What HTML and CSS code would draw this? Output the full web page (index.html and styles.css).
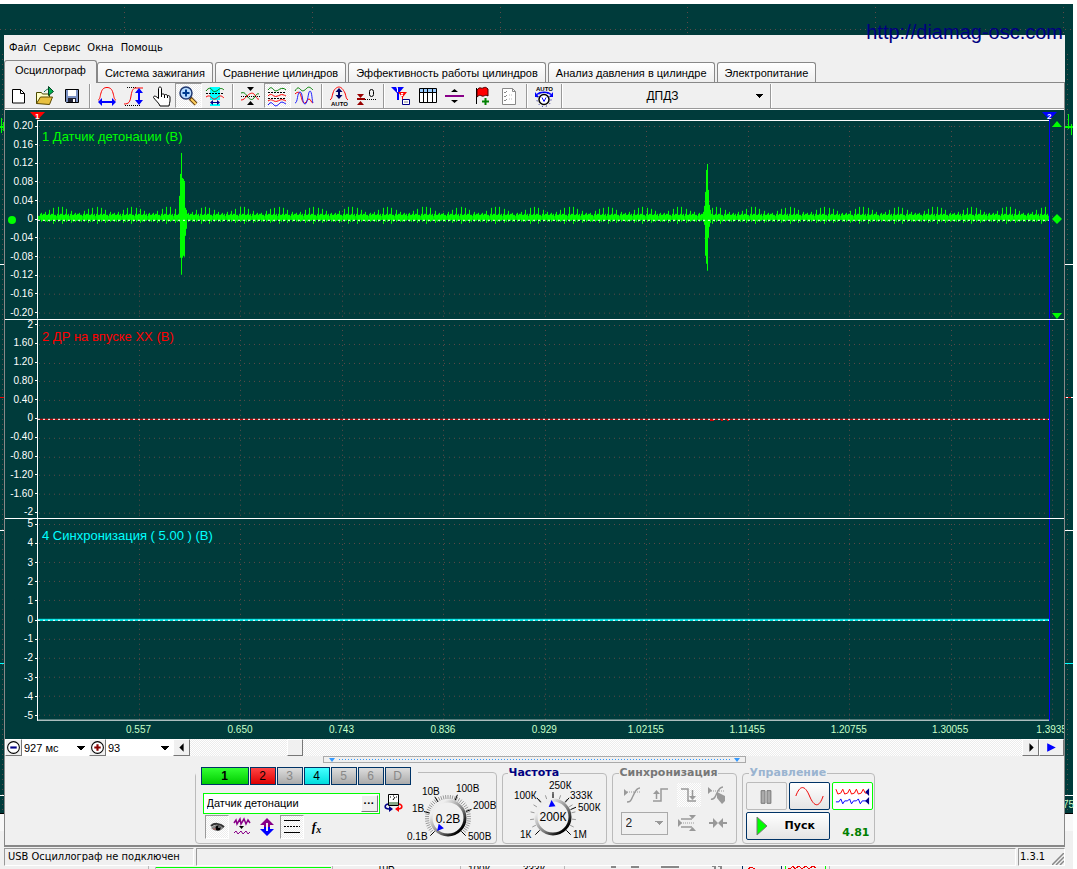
FILE: index.html
```html
<!DOCTYPE html>
<html lang="ru">
<head>
<meta charset="utf-8">
<title>Осциллограф</title>
<link rel="stylesheet" href="styles.css">
</head>
<body>
<div class="desktop">
  <svg class="backdrop" width="1077" height="869" shape-rendering="crispEdges" aria-hidden="true">
    <rect x="0" y="4" width="1073" height="865" fill="#f0f0f0"/>
    <rect x="0" y="4" width="1073" height="810" fill="#003b3b"/>
    <g stroke="#5c4a48" stroke-dasharray="1 4">
      <path d="M0 29.5H1073M124.5 7V35M312.5 7V35M500.5 7V35M687.5 7V35M875.5 7V35M1063.5 7V35"/>
      <path d="M2.5 54V810M1067.5 54V810"/>
    </g>
    <path d="M1065 264.5H1073M1065 530.5H1073M1065 795.5H1073M0 264.5H4M0 530.5H4M0 795.5H4" stroke="#fff"/>
    <path d="M1065 397.5H1073M0 397.5H4" stroke="#e00"/>
    <path d="M1066 397.5h2M1071 397.5h2" stroke="#fff"/>
    <path d="M1065 663.5H1073M0 663.5H4" stroke="#0ff"/>
    <path d="M0 126.5H4M0 127.5H4M1.500 118V133M3.500 122V131M1065 126.500H1073M1065 127.500H1073M1068.500 114V129M1071.500 124V135" stroke="#0f0"/>
    <path d="M0 813.5H4M1065 813.5H1073" stroke="#000"/>
    <rect x="0" y="814" width="1073" height="17" fill="#f8f8f8"/>
    <text x="1063" y="808" class="backdrop-text pale">75</text>
    <path d="M155 867.5H331" stroke="#0f0"/>
    <path d="M155 869V866.5M148.5 866V869M332.5 866V869M460.5 866V869M564.5 866V869M829.5 866V869" stroke="#b8b8b8"/>
    <text x="377" y="871" class="backdrop-text">10В</text>
    <text x="468" y="873" class="backdrop-text">100К</text>
    <text x="523" y="873" class="backdrop-text">333К</text>
    <path d="M611 867h5M631 867h8M661 867h18M712 866h3v3M718 866h3v3" stroke="#888" stroke-width="2" fill="none"/>
    <path d="M742.5 869V866M781.5 869V866" stroke="#036"/>
    <path d="M785.5 869V866M825.5 869V866" stroke="#0f0"/>
    <path d="M748 869l3-2 4 2M788 868h3l2-2 2 3 4-3 3 3 4-3 3 3 4-3 3 2" stroke="#e00" fill="none"/>
  </svg>

  <main class="window">
    <nav class="menu">
      <button>Файл</button><button>Сервис</button><button>Окна</button><button>Помощь</button>
    </nav>
    <div class="tabs">
      <button class="tab active">Осциллограф</button>
      <button class="tab">Система зажигания</button>
      <button class="tab">Сравнение цилиндров</button>
      <button class="tab">Эффективность работы цилиндров</button>
      <button class="tab">Анализ давления в цилиндре</button>
      <button class="tab">Электропитание</button>
    </div>

    <div class="page">
      <div class="toolbar">
        <button class="tool" aria-label="Новый"><svg viewBox="0 0 22 22"><path d="M5.5 4.500h8l4 4v9.500h-12z" fill="#fff" stroke="#000"/><path d="M13.500 4.500v4h4" fill="none" stroke="#000"/></svg></button>
        <button class="tool" aria-label="Открыть"><svg viewBox="0 0 22 22"><path d="M2.500 18.500v-11h5l1 1.500h7v4" fill="#ffffc8" stroke="#4a4a00"/><path d="M2.500 18.500l4-6.500h12l-3 7.500z" fill="#e8c040" stroke="#5a4800"/><path d="M10 7c2-2 3-3 5-3" stroke="#064" fill="none"/><path d="M14.500 1.500l5 5-5 4z" fill="#00b050" stroke="#042"/></svg></button>
        <button class="tool" aria-label="Сохранить"><svg viewBox="0 0 22 22"><path d="M4.500 4.500h13v13h-12l-1-1z" fill="#7c92c4" stroke="#000"/><path d="M7 5h8v6h-8z" fill="#fff"/><path d="M7 13h8v4h-8z" fill="#223"/><path d="M12 14h2v3h-2z" fill="#fff"/></svg></button>
        <i class="sep"></i>
        <button class="tool" aria-label="Период"><svg viewBox="0 0 22 22" fill="none"><path d="M2 15c2 0 2-4 3-7 1-4 3-5.500 6-5.500s5 1.500 6 5.500c1 3 1 7 3 7" stroke="red"/><path d="M3 17h16" stroke="#00f" stroke-width="2"/><path d="M2 17l4-4v8zM20 17l-4-4v8z" fill="#00f"/></svg></button>
        <button class="tool" aria-label="Амплитуда"><svg viewBox="0 0 22 22" fill="none"><path d="M4 2.500h10M2 20.500h16" stroke="#000" stroke-dasharray="1 1"/><path d="M1 19c5 0 6-2 7-8 1-7 3-8 5-8h7" stroke="red"/><path d="M16 5v13" stroke="#00f" stroke-width="2"/><path d="M16 3l4 5h-8zM16 20l4-5h-8z" fill="#00f"/></svg></button>
        <button class="tool" aria-label="Рука"><svg viewBox="0 0 22 22"><path d="M8.500 13V3.500c0-2 3-2 3 0v6c1-1 3-.5 3 .5 1-1 3-.5 3 1 1-1 2.500 0 2.500 1v4c0 2-1 3-1 5H10c-1-3-4-5-6.500-8.500 0-2 2-2 5 1z" fill="#fff" stroke="#000"/><path d="M11.500 9v3M14.500 10v3M17.500 11v2" stroke="#000"/></svg></button>
        <button class="tool pressed" aria-label="Масштаб"><svg viewBox="0 0 22 22"><path d="M13 13l6 6" stroke="#654010" stroke-width="4"/><path d="M14 14l5 5" stroke="#ffd060" stroke-width="2"/><circle cx="9" cy="8" r="6" fill="#b8dcff" stroke="#203870" stroke-width="1.500"/><path d="M9 4.500v7M5.500 8h7" stroke="#003c90" stroke-width="2"/></svg></button>
        <button class="tool" aria-label="Выделение"><svg viewBox="0 0 22 22" fill="none"><path d="M6 2h10v19H6z" fill="#0ff"/><path d="M2 6c3-4 5-3 6-1s4 2 6 0 4-2 6 0" stroke="#008000"/><path d="M2 8.500h18" stroke="#000" stroke-dasharray="2 1"/><path d="M2 12c3-2 4-1 6 1s4 1 6-1 4-1 6 1" stroke="red"/><path d="M6 15h10v4H6z" fill="#f0f0f0"/><path d="M8 17.500h6" stroke="#008"/><path d="M6 17.500l3-2.500v5zM16 17.500l-3-2.500v5z" fill="#008"/></svg></button>
        <i class="sep"></i>
        <button class="tool" aria-label="Сжать"><svg viewBox="0 0 22 22" fill="none"><path d="M2 8c3-1 4 0 6 3s5 5 7 2 3-5 5-4" stroke="green"/><path d="M2 15c3 0 4-2 6-4s5-4 7-2 3 6 5 5" stroke="red"/><path d="M2 11.500h19" stroke="#000" stroke-dasharray="1 1"/><path d="M8 2h7l-3.500 4zM8 20h7l-3.500-4z" fill="#000"/></svg></button>
        <button class="tool pressed" aria-label="Разделить"><svg viewBox="0 0 22 22" fill="none"><path d="M2 5c3-4 4-2 6 0s4 0 6-1 4-1 6 1" stroke="green"/><path d="M2 7.500h18M2 13.500h18" stroke="#000" stroke-dasharray="2 1"/><path d="M2 11c3-3 4-1 6 0s4 0 6-1 4 0 6 1M2 16c3-2 4-1 6 0s4 0 6-1 4 0 6 1" stroke="red"/><path d="M2 20c3-4 4-2 6 0s4 0 6-2 4 0 6 1" stroke="#00f"/></svg></button>
        <button class="tool" aria-label="Наложить"><svg viewBox="0 0 22 22" fill="none"><path d="M2 6c3-5 4-3 6-1s4 0 6-2 4 0 6 2" stroke="green"/><path d="M2 9c3-3 5-2 6 2s2 8 4 7 2-4 4-4 2 4 4 4" stroke="red"/><path d="M2 18c3 0 2-11 5-11s2 12 5 12 3-13 5-13 2 10 3 12" stroke="#22f"/></svg></button>
        <i class="sep"></i>
        <button class="tool" aria-label="Автоамплитуда"><svg viewBox="0 0 22 22" fill="none"><path d="M2 15c2-1 2-4 3-7 1-4 4-6 6-6s4 2 6 6c1 3 1 6 3 7" stroke="red"/><path d="M11 5v8" stroke="#006" stroke-width="2"/><path d="M11 3l3.500 4h-7zM11 14l3.500-4h-7z" fill="#006"/><text x="3" y="21" class="icon-text">AUTO</text></svg></button>
        <button class="tool" aria-label="Ноль"><svg viewBox="0 0 22 22" fill="none"><path d="M2 14h7M10 14.500h11" stroke="#000" stroke-dasharray="1 1"/><path d="M2 9h7l-3.500 4zM2 20h7l-3.500-4z" fill="#900"/><path d="M2 14h8" stroke="#900" stroke-width="2"/><rect x="14.500" y="4.500" width="4" height="7" rx="2" stroke="#000"/></svg></button>
        <i class="sep"></i>
        <button class="tool" aria-label="Маркеры"><svg viewBox="0 0 22 22"><path d="M1 2h13l-5 6v7H7V8z" fill="#00f"/><path d="M8 7h9l-4 5v7h-1v-7z" fill="red"/><path d="M6 3l1.500-.5V7M11 8.500h2l-2 2h2" stroke="#fff" fill="none"/><path d="M12.500 14.500h7v5h-7z" fill="#fff" stroke="#008"/><path d="M14 17h4" stroke="#888"/></svg></button>
        <button class="tool" aria-label="Таблица"><svg viewBox="0 0 22 22" fill="none"><path d="M2.500 3.500h17v14h-17z" fill="#fff" stroke="#000"/><path d="M3 4h16v3H3z" fill="#9cf"/><path d="M3 7.500h16M6.500 4v13M10.500 4v13M15.500 4v13" stroke="#000"/></svg></button>
        <button class="tool" aria-label="Центр"><svg viewBox="0 0 22 22"><path d="M1 10h19v2H1z" fill="#808"/><path d="M7 7h7l-3.500-3zM7 15h7l-3.500 3z"/></svg></button>
        <button class="tool" aria-label="Флаг"><svg viewBox="0 0 22 22"><path d="M5.500 3v16" stroke="#000"/><path d="M6 5c3-4 4-1 6-2s3-1 5 1v7c-3-2-4 1-6 0s-3-1-5 1z" fill="red" stroke="#400"/><path d="M14.500 13v7M11 16.500h7" stroke="green" stroke-width="2"/></svg></button>
        <button class="tool" aria-label="Отчёт"><svg viewBox="0 0 22 22" fill="none" stroke="#888"><path d="M4.500 3.500h10l3 3v13h-13z" fill="#fff"/><path d="M14.500 3.500v3h3M6 7l1 1 2-2M6 11l1 1 2-2M6 15l1 1 2-2"/><path d="M11 10h4M11 14h4" stroke="#bbb" stroke-dasharray="1 1"/></svg></button>
        <i class="sep"></i>
        <button class="tool" aria-label="Авторежим"><svg viewBox="0 0 22 22" fill="none"><text x="3" y="6" class="icon-text">AUTO</text><circle cx="11" cy="14.500" r="5" fill="#fff" stroke="#000" stroke-width="1.500"/><path d="M9 12.500l2 4 2-4" stroke="#00f"/><path d="M4 9.500c3-3 11-3 14 0" stroke="#00f" stroke-width="1.500"/><path d="M2 7v5h4zM20 7v5h-4z" fill="#00f"/><circle cx="11" cy="14.500" r="7" stroke="#008" stroke-dasharray="1 3"/></svg></button>
        <i class="sep"></i>
        <select class="preset" aria-label="Датчик"><option>ДПДЗ</option></select>
        <i class="sep"></i>
      </div>

      <div class="chart">
        <section class="channel first">
          <ol class="scale"><li>0.20</li><li>0.16</li><li>0.12</li><li>0.08</li><li>0.04</li><li>0</li><li>-0.04</li><li>-0.08</li><li>-0.12</li><li>-0.16</li><li>-0.20</li></ol>
          <div class="plot"><svg viewBox="0 0 1027 199" preserveAspectRatio="none" data-top="6" data-step="18.7" data-trace="knock"></svg><h2 class="green">1 Датчик детонации (В)</h2></div>
        </section>
        <section class="channel second">
          <ol class="scale"><li>2</li><li>1.60</li><li>1.20</li><li>0.80</li><li>0.40</li><li>0</li><li>-0.40</li><li>-0.80</li><li>-1.20</li><li>-1.60</li><li>-2</li></ol>
          <div class="plot"><svg viewBox="0 0 1027 199" preserveAspectRatio="none" data-top="5" data-step="18.8" data-trace="idle"></svg><h2 class="red">2 ДР на впуске ХХ (В)</h2></div>
        </section>
        <section class="channel third">
          <ol class="scale"><li>5</li><li>4</li><li>3</li><li>2</li><li>1</li><li>0</li><li>-1</li><li>-2</li><li>-3</li><li>-4</li><li>-5</li></ol>
          <div class="plot"><svg viewBox="0 0 1027 202" preserveAspectRatio="none" data-top="5" data-step="19.1" data-trace="sync"></svg><h2 class="cyan">4 Синхронизация ( 5.00 ) (В)</h2></div>
        </section>
        <ol class="times"><li>0.557</li><li>0.650</li><li>0.743</li><li>0.836</li><li>0.929</li><li>1.02155</li><li>1.11455</li><li>1.20755</li><li>1.30055</li><li>1.3935</li></ol>
        <svg class="marker start" viewBox="0 0 15 8"><path d="M0 0h15l-7.500 8z" fill="red"/><text x="5" y="7">1</text></svg>
        <svg class="marker end" viewBox="0 0 15 8"><path d="M0 0h15l-7.500 8z" fill="#00f"/><text x="5" y="7">2</text></svg>
        <svg class="limit top" viewBox="0 0 10 6"><path d="M5 0l5 6H0z" fill="#0f0"/></svg>
        <svg class="limit mid" viewBox="0 0 10 10"><path d="M5 0l5 5-5 5-5-5z" fill="#0f0"/></svg>
        <svg class="limit low" viewBox="0 0 10 6"><path d="M0 0h10L5 6z" fill="#0f0"/></svg>
        <i class="zero-dot"></i>
      </div>

      <div class="timebar">
        <button class="step" aria-label="Уменьшить"><svg viewBox="0 0 14 14"><circle cx="7" cy="7" r="5.500" fill="#fff" stroke="#000"/><path d="M4 7h6" stroke="#008" stroke-width="2"/></svg></button>
        <select aria-label="Развёртка"><option>927 мс</option></select>
        <button class="step" aria-label="Увеличить"><svg viewBox="0 0 14 14"><circle cx="7" cy="7" r="5.500" fill="#fff" stroke="#000"/><path d="M4 7h6M7 4v6" stroke="#800" stroke-width="2"/></svg></button>
        <select aria-label="Деление"><option>93</option></select>
        <button class="step" aria-label="Назад"><svg viewBox="0 0 14 14"><path d="M9 3v8L5 7z"/></svg></button>
        <input type="range" min="0" max="1000" value="119" aria-label="Позиция">
        <button class="step" aria-label="Вперёд"><svg viewBox="0 0 14 14"><path d="M6 3v8l4-4z"/></svg></button>
        <button class="step wide" aria-label="В конец"><svg viewBox="0 0 14 14"><path d="M3 3v8l8-4z" fill="#00f"/></svg></button>
      </div>

      <div class="splitter"><i></i><span></span><i></i></div>

      <div class="controls">
        <section class="group channels">
          <div class="channel-tabs">
            <button class="ch one">1</button><button class="ch two">2</button><button class="ch" disabled>3</button><button class="ch four">4</button><button class="ch" disabled>5</button><button class="ch" disabled>6</button><button class="ch" disabled>D</button>
          </div>
          <div class="channel-body">
            <div class="channel-left">
              <div class="sensor-row">
                <div class="sensor"><input type="text" value="Датчик детонации" aria-label="Имя датчика"><button aria-label="Выбрать">···</button></div>
                <button class="mini" aria-label="Прибор"><svg viewBox="0 0 20 20" fill="none"><path d="M4.500 1.500h10v11h-10z" fill="#fff" stroke="#000"/><path d="M5 9h9v3H5z" fill="#8a8"/><path d="M6 4h1M9 3h1M12 4h1M9 7l2-3" stroke="#000"/><path d="M4 11c-4 1-4 5 1 5" stroke="#008" stroke-width="1.500"/><path d="M5 13l4 3-4 3z" fill="#008"/><path d="M15 11c4 1 4 5-1 5" stroke="red" stroke-width="1.500"/><path d="M15 13l-4 3 4 3z" fill="red"/></svg></button>
              </div>
              <div class="mini-row">
                <button class="mini pressed" aria-label="Видимость"><svg viewBox="0 0 20 20"><path d="M4 11c4-4 9-5 13-1-3 5-9 5-13 1z" fill="#888"/><path d="M4 9c3-3 9-3 13 1" stroke="#333" stroke-width="2" fill="none"/><circle cx="11" cy="11" r="2.500"/><path d="M6 12h3" stroke="#a55"/><circle cx="12" cy="10" r=".8" fill="#ddd"/></svg></button>
                <button class="mini" aria-label="Фильтр"><svg viewBox="0 0 20 20" fill="none" stroke="#808"><path d="M2 6l2-3 1 4 3-5 1 5 3-5 2 5 2-4 2 3" stroke-width="1.500"/><path d="M2 16l2-2 2 3 3-3 2 3 3-3 2 3 2-2"/><path d="M7 9h5l-2.500 3z" fill="#000" stroke="none"/></svg></button>
                <button class="mini" aria-label="Сдвиг"><svg viewBox="0 0 20 20"><path d="M10 1l7 7h-4v3H7V8H3z" fill="#808"/><path d="M10 19l7-7h-4v-2H7v2H3z" fill="#00f"/><path d="M10 6v8" stroke="#eee" stroke-width="2"/></svg></button>
                <button class="mini pressed" aria-label="Линии"><svg viewBox="0 0 20 20" stroke="#000"><path d="M2 3.500h16M2 15.500h16"/><path d="M2 9.500h16" stroke-dasharray="2 1"/></svg></button>
                <button class="mini formula" aria-label="Формула"><em>f</em><sub>x</sub></button>
              </div>
            </div>
            <svg class="knob" data-angle="-140" data-ticks="44" viewBox="0 0 90 60" width="90" height="60">
              <text x="16" y="12">10В</text><text x="50" y="9">100В</text><text x="6" y="29">1В</text><text x="67" y="26">200В</text><text x="1" y="57">0.1В</text><text x="62" y="57">500В</text>
              <text class="value" x="42" y="40">0.2В</text>
            </svg>
          </div>
        </section>

        <fieldset class="group freq">
          <legend>Частота</legend>
          <svg class="knob" data-angle="-5" data-ticks="14" viewBox="0 0 100 60" width="100" height="60">
            <text x="44" y="10">250К</text><text x="9" y="20">100К</text><text x="65" y="20">333К</text><text x="73" y="32">500К</text><text x="15" y="59">1К</text><text x="68" y="59">1М</text>
            <text class="value" x="48" y="42">200К</text>
          </svg>
        </fieldset>

        <fieldset class="group sync">
          <legend>Синхронизация</legend>
          <div class="sync-row">
            <button class="mini" disabled aria-label="Уровень"><svg viewBox="0 0 20 20" fill="none" stroke="#999"><path d="M2 7h15" stroke-dasharray="1 1"/><path d="M4 17c4 0 4-2 6-6s3-8 7-8" stroke-width="1.500"/><path d="M1 4v7l4-3.500z" fill="#999" stroke="none"/></svg></button>
            <button class="mini" disabled aria-label="Фронт"><svg viewBox="0 0 20 20" fill="none" stroke="#999" stroke-width="1.500"><path d="M2 16h8V4h7M5.500 14V7"/><path d="M2 9l3.500-4L9 9z" fill="#999" stroke="none"/></svg></button>
            <button class="mini hatched" disabled aria-label="Спад"><svg viewBox="0 0 20 20" fill="none" stroke="#999" stroke-width="1.500"><path d="M2 4h7v12h8M13.500 5v7"/><path d="M10 11l3.500 4 3.500-4z" fill="#999" stroke="none"/></svg></button>
            <button class="mini" disabled aria-label="Ручной"><svg viewBox="0 0 20 20" fill="none" stroke="#999"><path d="M2 6h15" stroke-dasharray="1 1"/><path d="M4 14c6 2 5-12 12-12" stroke-width="1.500"/><path d="M1 2v7l4-3.500zM10 7l8 4v5l-3 3-5-6z" fill="#999" stroke="none"/></svg></button>
          </div>
          <div class="sync-row">
            <select disabled aria-label="Канал"><option>2</option></select>
            <button class="mini" disabled aria-label="Порог"><svg viewBox="0 0 20 20" fill="none" stroke="#999"><path d="M4 6h11M4 14h11" stroke-width="1.500"/><path d="M4 10h13" stroke-dasharray="1 1"/><path d="M1 6v8l4-4zM12 2h7l-3.500 4zM12 18h7l-3.500-4z" fill="#999" stroke="none"/></svg></button>
            <button class="mini" disabled aria-label="Центр"><svg viewBox="0 0 20 20" fill="#999"><path d="M1 9h4V5l5 5-5 5v-4H1zM19 9h-4V5l-5 5 5 5v-4h4z"/></svg></button>
          </div>
        </fieldset>

        <fieldset class="group run">
          <legend>Управление</legend>
          <div class="run-grid">
            <button class="big" disabled aria-label="Пауза"><svg viewBox="0 0 40 26" stroke="#777" fill="#aaa"><path d="M14.500 7.500h4v13h-4zM20.500 7.500h4v13h-4z"/></svg></button>
            <button class="big blue" aria-label="Однократно"><svg viewBox="0 0 40 26"><path d="M6 13c4-11 9-12 14 0s10 12 14 0" stroke="#e00" fill="none"/></svg></button>
            <button class="big lime" aria-label="Непрерывно"><svg viewBox="0 0 40 26" fill="none"><path d="M3 6l2 5 3-1 2-4 2 5 3-1 2-4 2 5 3-1 2-4 2 5 3-1 2-4 2 4h3" stroke="red"/><path d="M3 19h3l2-3 2 5 2-3h3l2-2 2 5 2-3h3l2-2 2 5 2-3h4" stroke="#00f"/><path d="M37 5v8l-4-4zM37 14v8l-4-4z" fill="#008"/></svg></button>
            <button class="start-button"><svg viewBox="0 0 12 20"><path d="M1 1l10 9-10 9z" fill="#0f0" stroke="#777"/></svg>Пуск</button>
            <output>4.81</output>
          </div>
        </fieldset>
      </div>
    </div>

    <footer class="status">
      <span class="message">USB Осциллограф не подключен</span>
      <span class="blank"></span>
      <span class="version">1.3.1<svg viewBox="0 0 12 12" width="12" height="12"><path d="M0 12L12 0M4 12l8-8M8 12l4-4" stroke="#888" stroke-width="1.500"/></svg></span>
    </footer>
  </main>
  <a class="site" href="#">http://diamag-osc.com</a>
</div>
<script src="script.js"></script>
</body>
</html>
```
FILE: styles.css
```css
* { box-sizing: border-box; }
body { margin: 0; background: #fff; font: 11px/14px "Liberation Sans", Arial, sans-serif; color: #000; }
button, select, input { font: inherit; color: inherit; margin: 0; padding: 0; border: 0; border-radius: 0; background: none; }
select { appearance: none; opacity: 1; }
ol { list-style: none; margin: 0; padding: 0; }

.desktop { position: relative; min-height: 100vh; padding: 35px 12px 3px 4px; display: flex; overflow: hidden; }
.backdrop { position: absolute; left: 0; top: 0; }
.backdrop-text { font-size: 10px; fill: #000; }
.pale { fill: #c8ffc8; }
.site { position: absolute; right: 14px; top: 20px; font-size: 20px; line-height: 24px; color: navy; text-decoration: none; }
.window { position: relative; flex: 1; min-width: 0; display: flex; flex-direction: column; background: #f0f0f0; }

.menu { display: flex; gap: 7px; padding: 6px 5px 5px; font: 11px/14px "DejaVu Sans Condensed", "DejaVu Sans", sans-serif; }
.tabs { display: flex; align-items: flex-end; gap: 2px; height: 22px; }
.tab { height: 20px; padding: 0 7px; border: 1px solid #888; border-bottom: 0; border-radius: 3px 3px 0 0; background: linear-gradient(#fff, #eee); white-space: nowrap; }
.tab.active { height: 23px; padding: 0 10px 4px; margin: 0 -2px -1px 0; background: #f0f0f0; z-index: 1; }

.page { flex: 1; min-height: 0; display: flex; flex-direction: column; border: 1px solid #888; border-bottom-width: 2px; }
.toolbar { display: flex; align-items: center; height: 26px; border-bottom: 1px solid #999; box-shadow: 0 1px #fff; margin-bottom: 1px; }
.tool { flex: none; width: 27px; height: 25px; padding: 1px 2px; }
.tool svg { display: block; width: 22px; height: 22px; }
.icon-text { font: bold 6px "Liberation Sans", sans-serif; fill: #000; }
.pressed, .hatched { background: repeating-conic-gradient(#fff 0 25%, #ececec 0 50%) 0 0 / 2px 2px; }
.pressed { border: 1px solid #999; border-right-color: #fff; border-bottom-color: #fff; }
.tool.pressed { padding: 0 1px; }
.sep { flex: none; width: 8px; height: 24px; background: linear-gradient(90deg, transparent 3px, #999 3px 4px, #fff 4px 5px, transparent 5px); }
.preset { width: 201px; height: 24px; padding-right: 8px; font-size: 12px; text-align: center; text-align-last: center; }
.preset, .timebar select, .sync select {
  background-image: conic-gradient(from -45deg at 50% 100%, #000 90deg, transparent 0);
  background-repeat: no-repeat; background-position: right 4px center; background-size: 8px 4px;
}

.chart { position: relative; flex: 1; min-height: 400px; display: grid; grid-template-rows: 210fr 200fr 202fr 18px; background: #003b3b; color: #fff; font-size: 10px; line-height: 10px; overflow: hidden; }
.channel { display: grid; grid-template-columns: 32px minmax(0, 1fr); min-height: 0; border-bottom: 1px solid #fff; }
.channel.first { padding-top: 10px; }
.channel.third { border: 0; }
.scale { display: flex; flex-direction: column; justify-content: space-between; }
.first .scale { padding: 1px 0; }
.second .scale { padding-bottom: 1px; }
.scale li { display: flex; justify-content: flex-end; align-items: center; gap: 2px; }
.scale li::after { content: ""; width: 2px; height: 1px; background: #fff; }
.plot { position: relative; min-height: 0; }
.plot > svg { position: absolute; width: 100%; height: 100%; shape-rendering: crispEdges; }
.plot h2 { position: absolute; left: 5px; top: 9px; margin: 0; font-size: 13px; line-height: 15px; font-weight: 400; }
.green { color: #0f0; } .red { color: #f00; } .cyan { color: #0ff; }
.times { display: grid; grid-template-columns: 4.95% repeat(10, 9.879%); margin-left: 32px; padding-top: 4px; text-align: center; color: #c8ffc8; white-space: nowrap; overflow: hidden; }
.times li:first-child { grid-column: 2; }
.marker { position: absolute; top: 2px; width: 15px; height: 8px; }
.marker text { font: bold 8px "Liberation Sans", sans-serif; fill: #fff; }
.start { left: 25px; } .end { right: 7px; }
.limit { position: absolute; right: 2px; width: 10px; }
.limit.top { top: 11px; } .limit.mid { top: 104px; } .limit.low { top: 203px; }
.zero-dot { position: absolute; left: 3px; top: 106px; width: 8px; height: 8px; border-radius: 50%; background: #0f0; }

.timebar { display: flex; height: 17px; background: #fff; }
.step { flex: none; width: 17px; background: #f0f0f0; border: 1px solid #fff; border-right-color: #777; border-bottom-color: #777; }
.step svg { display: block; width: 15px; height: 15px; margin: auto; }
.step.wide { width: 25px; }
.timebar select { width: 67px; padding-left: 2px; font-size: 11px; }
.timebar input { appearance: none; flex: 1; min-width: 0; background: repeating-conic-gradient(#fff 0 25%, #ececec 0 50%) 0 0 / 2px 2px; }
.timebar input::-webkit-slider-thumb { appearance: none; width: 16px; height: 17px; background: #f0f0f0; border: 1px solid #fff; border-right-color: #777; border-bottom-color: #777; }

.splitter { display: flex; align-items: center; align-self: center; gap: 4px; width: 40%; height: 7px; padding: 0 5px; border: 1px solid #aaa; }
.splitter i { border: 3px solid transparent; border-top: 4px solid #39f; border-bottom: 0; }
.splitter span { flex: 1; height: 1px; background: repeating-linear-gradient(90deg, #39f 0 1px, transparent 1px 3px); }

.controls { display: flex; justify-content: center; gap: 5px; padding: 4px 0 1px; }
.group { margin: 0; border: 1px solid #bbb; border-radius: 4px; padding: 0; height: 77px; min-width: 0; }
.group legend { margin-left: 6px; padding: 0 1px; font: bold 11px/12px "DejaVu Sans", sans-serif; color: #777; }
.group.freq legend { color: navy; margin-left: 5px; }
.group.run legend { color: #9ab4d0; }
.group.channels { width: 302px; height: 72px; margin-top: 5px; }
.channel-tabs { display: flex; gap: 1px; width: 222px; margin-top: -6px; padding: 0 6px 0 5px; background: #f0f0f0; }
.ch { flex: none; width: 26px; height: 18px; border: 1px solid #036; background: linear-gradient(#ddd, #aaa); font-size: 12px; line-height: 16px; }
.ch:disabled { color: #888; }
.ch.one { width: 48px; background: linear-gradient(#3f3, #0c0); font-weight: 700; }
.ch.two { background: linear-gradient(#f44, #d00); }
.ch.four { background: linear-gradient(#4ff, #0dd); }
.channel-body { display: flex; }
.channel-left { width: 211px; padding: 6px 0 0 7px; }
.sensor-row, .mini-row { display: flex; align-items: center; }
.sensor-row { gap: 2px; }
.sensor { display: flex; width: 177px; height: 21px; border: 1px solid #0f0; background: #fff; padding: 1px; }
.sensor input { flex: 1; min-width: 0; padding-left: 2px; }
.sensor button { width: 17px; background: #f0f0f0; border: 1px solid #fff; border-right-color: #777; border-bottom-color: #777; font-weight: 700; line-height: 10px; }
.mini { width: 24px; height: 24px; padding: 2px; }
.mini.pressed { padding: 1px; }
.mini svg { display: block; width: 20px; height: 20px; }
.mini-row { gap: 1px; padding-left: 2px; }
.formula { font: bold italic 13px/16px "Liberation Serif", serif; }
.formula sub { font-size: 10px; line-height: 0; vertical-align: -2px; }
.knob { display: block; flex: none; font-size: 10px; overflow: visible; }
.knob .value { font-size: 12px; text-anchor: middle; }
.channels .knob { margin-top: -2px; }
.freq { width: 105px; }
.freq .knob { margin: 0 2px; }
.sync { width: 125px; }
.sync-row { display: flex; align-items: center; justify-content: space-between; padding: 4px 6px 0 8px; }
.sync select { width: 47px; height: 23px; border: 1px solid #aaa; padding-left: 4px; color: #222; font-size: 12px; background-image: conic-gradient(from -45deg at 50% 100%, #999 90deg, transparent 0); }
.run { width: 133px; }
.run-grid { display: grid; grid-template-columns: 41px 41px 41px; grid-template-rows: 28px 28px; gap: 2px; padding: 3px 3px 0; }
.big { border: 1px solid #bbb; border-radius: 2px; }
.big svg { display: block; width: 39px; height: 26px; }
.blue, .start-button { border: 1px solid #036; background: linear-gradient(#fff, #e4e4e4); border-radius: 2px; }
.lime { border-color: #0f0; background: #fff; }
.start-button { grid-column: span 2; display: flex; align-items: center; gap: 17px; padding-left: 9px; font: bold 11px/14px "DejaVu Sans", sans-serif; }
.start-button svg { width: 12px; height: 20px; }
.run output { align-self: end; text-align: right; padding-right: 3px; font: bold 11px/14px "DejaVu Sans", sans-serif; color: green; }

.status { display: flex; gap: 2px; height: 19px; padding-top: 1px; font: 11px/16px "DejaVu Sans Condensed", "DejaVu Sans", sans-serif; }
.status span { border: 1px solid #999; border-right-color: #fff; border-bottom-color: #fff; }
.message { width: 190px; padding-left: 3px; white-space: nowrap; }
.blank { flex: 1; }
.version { display: flex; align-items: flex-end; justify-content: space-between; width: 47px; padding-left: 1px; }
```
FILE: script.js
```js
const NS = "http://www.w3.org/2000/svg";

function add(svg, name, attrs, first) {
  const el = document.createElementNS(NS, name);
  for (const key in attrs) el.setAttribute(key, attrs[key]);
  if (first) svg.insertBefore(el, svg.firstChild);
  else svg.appendChild(el);
}

function knockTrace() {
  let d = "M1 96.5H1012M1 97.5H1012M1 98.5H1012M1 99.5H1012";
  for (let i = 0; i < 233; i++) {
    const x = Math.floor(4 + i * 4.33);
    const swell = 0.5 + 0.5 * Math.cos((x - 22) * 2 * Math.PI / 36.5);
    const top = Math.round(93 - 6 * swell);
    const low = Math.round(102 + 2 * swell * (i % 2));
    d += `M${x}.5 ${top}V${low}M${x - 1}.5 94V98M${x + 1}.5 95V101M${x + 2}.5 ${94 + i % 2}V${101 + i % 2}`;
  }
  d += "M144.500 33V155M143.500 54V138M145.500 58V138M146.500 59V136M147.500 61V137M148.500 88V116M142.500 76V100M149.500 90V109";
  d += "M670.500 44V151M669.500 50V144M668.500 72V136M671.500 70V118M672.500 85V107M667.500 86V105M673.500 90V103";
  return d;
}

document.querySelectorAll(".plot > svg").forEach(svg => {
  const top = +svg.dataset.top;
  const step = +svg.dataset.step;
  const height = svg.viewBox.baseVal.height;
  let grid = "";
  for (let i = 0; i <= 10; i++) grid += `M2 ${Math.round(top + i * step)}.5H1012`;
  for (let i = 0; i < 10; i++) grid += `M${Math.round(102 + i * 101.45)}.5 ${top}V${height}`;
  add(svg, "path", { d: grid, stroke: "#5c4a48", "stroke-dasharray": "1 4" });
  const zero = Math.round(top + 5 * step) + 0.5;
  const trace = svg.dataset.trace;
  if (trace === "knock") {
    add(svg, "path", { d: knockTrace(), stroke: "#0f0" });
    add(svg, "path", { d: "M0 .5H1012", stroke: "#fff" });
  }
  if (trace === "idle") {
    add(svg, "path", { d: `M1 ${zero}H1012M673 ${zero + 1}h4M684 ${zero + 1}h2M690 ${zero + 1}h2`, stroke: "#e00" });
  }
  if (trace === "sync") {
    add(svg, "path", { d: `M1 ${zero - 1}H1012M1 ${zero}H1012`, stroke: "#0ff" });
    add(svg, "path", { d: "M0 201.5H1012", stroke: "#fff" });
  }
  add(svg, "path", { d: `M1 ${zero}H1012`, stroke: "#fff", "stroke-dasharray": "2 3" });
  add(svg, "path", { d: `M.5 0V${height}`, stroke: "#fff" });
  add(svg, "path", { d: `M1012.5 0V${height}`, stroke: "#00f" });
});

document.querySelectorAll(".knob").forEach((svg, n) => {
  const cx = n ? 48 : 42;
  const cy = n ? 38 : 35;
  const count = +svg.dataset.ticks;
  const point = (deg, r) => {
    const a = deg * Math.PI / 180;
    return `${(cx + r * Math.sin(a)).toFixed(1)} ${(cy - r * Math.cos(a)).toFixed(1)}`;
  };
  let ticks = "";
  for (let i = 0; i <= count; i++) {
    const deg = -135 + i * 270 / count;
    ticks += `M${point(deg, 19)}L${point(deg, 23)}`;
  }
  let marks = "";
  const major = n ? [-135, -40, 0, 40, 67, 135] : [-135, -75, -32, 22, 70, 135];
  major.forEach(deg => { marks += `M${point(deg, 19)}L${point(deg, 25)}`; });
  const angle = +svg.dataset.angle;
  const id = `rim${n}`;
  add(svg, "path", { d: `M${point(angle, 17)}L${point(angle - 18, 11)}L${point(angle + 18, 11)}Z`, fill: "#00f" }, true);
  add(svg, "circle", { cx, cy, r: 17, fill: "#f0f0f0", stroke: `url(#${id})`, "stroke-width": 3 }, true);
  add(svg, "path", { d: marks, stroke: "#000" }, true);
  add(svg, "path", { d: ticks, stroke: "#999" }, true);
  add(svg, "linearGradient", { id, x1: 0, y1: 0, x2: 1, y2: 1 }, true);
  const gradient = svg.querySelector("linearGradient");
  add(gradient, "stop", { offset: 0.2, "stop-color": "#eee" });
  add(gradient, "stop", { offset: 0.6, "stop-color": "#777" });
  add(gradient, "stop", { offset: 0.85, "stop-color": "#000" });
});
```
